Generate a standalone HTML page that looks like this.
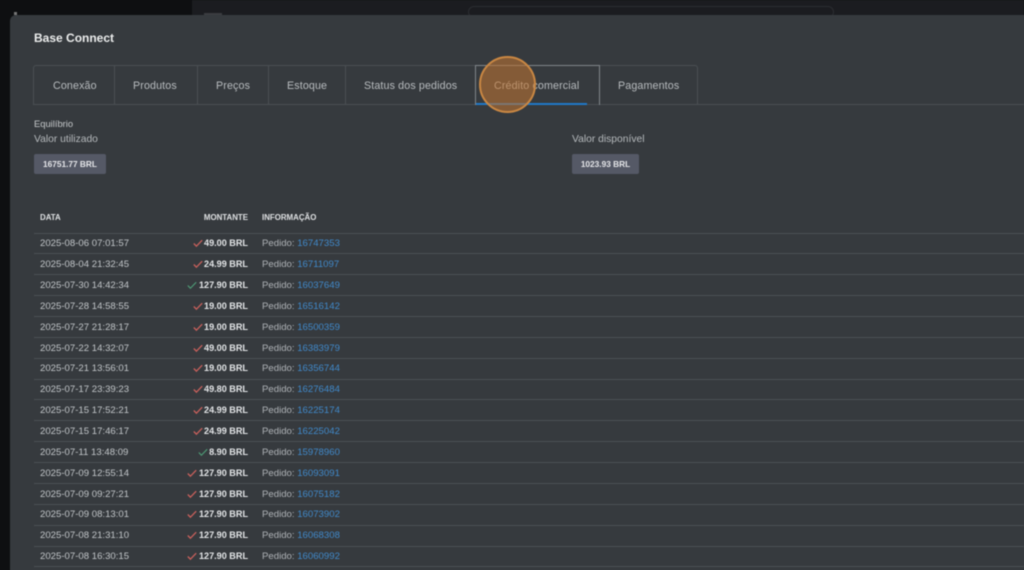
<!DOCTYPE html>
<html lang="pt"><head><meta charset="utf-8"><title>Base Connect</title>
<style>
*{box-sizing:border-box}
html,body{margin:0;padding:0;width:1024px;height:570px;overflow:hidden;background:#0e0f11}
body{font-family:"Liberation Sans",sans-serif;position:relative}
#p{position:absolute;inset:0;filter:blur(.4px)}
.a{position:absolute;white-space:nowrap}
.top{left:192px;top:0;width:832px;height:15px;background:#1b1c20}
.modal{left:10px;top:15px;width:1030px;height:570px;background:#363a3e;border-radius:6px 0 0 0}
.t{font-size:10.7px;color:#b8bcbf;line-height:13px;letter-spacing:.13px}
.sep{top:65px;width:1px;height:39px;background:#4a4f53}
.h{top:213px;font-size:7.9px;font-weight:700;color:#dfe1e3;line-height:10px}
.ln{left:34px;width:990px;height:1px;background:#4b5054}
.d,.i{margin-top:1px}
.d{left:40px;font-size:9.6px;color:#c2c6c9;line-height:12px}
.m{right:776px;font-size:9.1px;font-weight:700;color:#e4e6e8;line-height:12px}
.i{left:262px;font-size:9.6px;color:#afb3b7;line-height:12px}
.i b{font-weight:400;color:#4089ca}
svg{position:absolute;margin-top:1px}
.badge{top:154px;height:20px;background:#555966;border-radius:2px;font-size:8.3px;font-weight:700;color:#e6e7ea;line-height:20px;text-align:center}
</style></head><body><div id="p">
<div class="a top"></div>
<div class="a" style="left:14px;top:12px;width:3px;height:3px;background:#777"></div>
<div class="a" style="left:204px;top:13px;width:18px;height:2px;background:#3a3c40"></div>
<div class="a" style="left:468px;top:6px;width:366px;height:12px;border:1px solid #2b2d31;border-radius:9px"></div>
<div class="a modal"></div>
<div class="a" style="left:34px;top:31px;font-size:12px;font-weight:700;color:#eceded;line-height:15px">Base Connect</div>

<div class="a" style="left:33px;top:65px;width:665px;height:40px;border:1px solid #4a4f53;border-radius:3px 3px 0 0"></div>
<div class="a" style="left:33px;top:104px;width:991px;height:1px;background:#4a4f53"></div>
<div class="a sep" style="left:114px"></div>
<div class="a sep" style="left:197px"></div>
<div class="a sep" style="left:268px"></div>
<div class="a sep" style="left:345px"></div>
<div class="a" style="left:475px;top:65px;width:125px;height:40px;border:1px solid #80858a;border-bottom:0"></div>
<div class="a" style="left:476px;top:103px;width:111px;height:2px;background:#1f78c8"></div>
<div class="a t" style="left:53px;top:80px">Conexão</div>
<div class="a t" style="left:133px;top:80px">Produtos</div>
<div class="a t" style="left:216px;top:80px">Preços</div>
<div class="a t" style="left:287px;top:80px">Estoque</div>
<div class="a t" style="left:364px;top:80px">Status dos pedidos</div>
<div class="a t" style="left:494px;top:80px">Crédito comercial</div>
<div class="a t" style="left:618px;top:80px">Pagamentos</div>
<div class="a" style="left:479px;top:56px;width:57px;height:57px;border-radius:50%;background:rgba(190,115,50,.58);border:2px solid #c98743"></div>

<div class="a" style="left:34px;top:118px;font-size:9.4px;color:#c6c9cb;line-height:12px">Equilíbrio</div>
<div class="a" style="left:34px;top:133px;font-size:10.3px;color:#b5b9bc;line-height:13px">Valor utilizado</div>
<div class="a" style="left:572px;top:133px;font-size:10.3px;color:#b5b9bc;line-height:13px">Valor disponível</div>
<div class="a badge" style="left:34px;width:72px">16751.77 BRL</div>
<div class="a badge" style="left:572px;width:67px">1023.93 BRL</div>

<div class="a h" style="left:40px">DATA</div>
<div class="a h" style="right:776px">MONTANTE</div>
<div class="a h" style="left:262px">INFORMAÇÃO</div>

<div class="a ln" style="top:233px"></div><div class="a ln" style="top:253px"></div><div class="a ln" style="top:274px"></div><div class="a ln" style="top:295px"></div><div class="a ln" style="top:316px"></div><div class="a ln" style="top:337px"></div><div class="a ln" style="top:358px"></div><div class="a ln" style="top:379px"></div><div class="a ln" style="top:399px"></div><div class="a ln" style="top:420px"></div><div class="a ln" style="top:441px"></div><div class="a ln" style="top:462px"></div><div class="a ln" style="top:483px"></div><div class="a ln" style="top:504px"></div><div class="a ln" style="top:525px"></div><div class="a ln" style="top:546px"></div><div class="a ln" style="top:566px"></div>

<div class="a d" style="top:237px">2025-08-06 07:01:57</div><div class="a m" style="top:237px">49.00 BRL</div><div class="a i" style="top:237px">Pedido: <b>16747353</b></div>
<svg style="left:193px;top:238px" width="10" height="9" viewBox="0 0 10 9"><path d="M.8 4.5 3.4 7.2 9.2 1.2" fill="none" stroke="#c9605c" stroke-width="1.3"/></svg>
<div class="a d" style="top:258px">2025-08-04 21:32:45</div><div class="a m" style="top:258px">24.99 BRL</div><div class="a i" style="top:258px">Pedido: <b>16711097</b></div>
<svg style="left:193px;top:259px" width="10" height="9" viewBox="0 0 10 9"><path d="M.8 4.5 3.4 7.2 9.2 1.2" fill="none" stroke="#c9605c" stroke-width="1.3"/></svg>
<div class="a d" style="top:279px">2025-07-30 14:42:34</div><div class="a m" style="top:279px">127.90 BRL</div><div class="a i" style="top:279px">Pedido: <b>16037649</b></div>
<svg style="left:187px;top:280px" width="10" height="9" viewBox="0 0 10 9"><path d="M.8 4.5 3.4 7.2 9.2 1.2" fill="none" stroke="#4f9f78" stroke-width="1.1"/></svg>
<div class="a d" style="top:300px">2025-07-28 14:58:55</div><div class="a m" style="top:300px">19.00 BRL</div><div class="a i" style="top:300px">Pedido: <b>16516142</b></div>
<svg style="left:193px;top:301px" width="10" height="9" viewBox="0 0 10 9"><path d="M.8 4.5 3.4 7.2 9.2 1.2" fill="none" stroke="#c9605c" stroke-width="1.3"/></svg>
<div class="a d" style="top:321px">2025-07-27 21:28:17</div><div class="a m" style="top:321px">19.00 BRL</div><div class="a i" style="top:321px">Pedido: <b>16500359</b></div>
<svg style="left:193px;top:322px" width="10" height="9" viewBox="0 0 10 9"><path d="M.8 4.5 3.4 7.2 9.2 1.2" fill="none" stroke="#c9605c" stroke-width="1.3"/></svg>
<div class="a d" style="top:342px">2025-07-22 14:32:07</div><div class="a m" style="top:342px">49.00 BRL</div><div class="a i" style="top:342px">Pedido: <b>16383979</b></div>
<svg style="left:193px;top:343px" width="10" height="9" viewBox="0 0 10 9"><path d="M.8 4.5 3.4 7.2 9.2 1.2" fill="none" stroke="#c9605c" stroke-width="1.3"/></svg>
<div class="a d" style="top:362px">2025-07-21 13:56:01</div><div class="a m" style="top:362px">19.00 BRL</div><div class="a i" style="top:362px">Pedido: <b>16356744</b></div>
<svg style="left:193px;top:363px" width="10" height="9" viewBox="0 0 10 9"><path d="M.8 4.5 3.4 7.2 9.2 1.2" fill="none" stroke="#c9605c" stroke-width="1.3"/></svg>
<div class="a d" style="top:383px">2025-07-17 23:39:23</div><div class="a m" style="top:383px">49.80 BRL</div><div class="a i" style="top:383px">Pedido: <b>16276484</b></div>
<svg style="left:193px;top:384px" width="10" height="9" viewBox="0 0 10 9"><path d="M.8 4.5 3.4 7.2 9.2 1.2" fill="none" stroke="#c9605c" stroke-width="1.3"/></svg>
<div class="a d" style="top:404px">2025-07-15 17:52:21</div><div class="a m" style="top:404px">24.99 BRL</div><div class="a i" style="top:404px">Pedido: <b>16225174</b></div>
<svg style="left:193px;top:405px" width="10" height="9" viewBox="0 0 10 9"><path d="M.8 4.5 3.4 7.2 9.2 1.2" fill="none" stroke="#c9605c" stroke-width="1.3"/></svg>
<div class="a d" style="top:425px">2025-07-15 17:46:17</div><div class="a m" style="top:425px">24.99 BRL</div><div class="a i" style="top:425px">Pedido: <b>16225042</b></div>
<svg style="left:193px;top:426px" width="10" height="9" viewBox="0 0 10 9"><path d="M.8 4.5 3.4 7.2 9.2 1.2" fill="none" stroke="#c9605c" stroke-width="1.3"/></svg>
<div class="a d" style="top:446px">2025-07-11 13:48:09</div><div class="a m" style="top:446px">8.90 BRL</div><div class="a i" style="top:446px">Pedido: <b>15978960</b></div>
<svg style="left:198px;top:447px" width="10" height="9" viewBox="0 0 10 9"><path d="M.8 4.5 3.4 7.2 9.2 1.2" fill="none" stroke="#4f9f78" stroke-width="1.1"/></svg>
<div class="a d" style="top:467px">2025-07-09 12:55:14</div><div class="a m" style="top:467px">127.90 BRL</div><div class="a i" style="top:467px">Pedido: <b>16093091</b></div>
<svg style="left:187px;top:468px" width="10" height="9" viewBox="0 0 10 9"><path d="M.8 4.5 3.4 7.2 9.2 1.2" fill="none" stroke="#c9605c" stroke-width="1.3"/></svg>
<div class="a d" style="top:488px">2025-07-09 09:27:21</div><div class="a m" style="top:488px">127.90 BRL</div><div class="a i" style="top:488px">Pedido: <b>16075182</b></div>
<svg style="left:187px;top:489px" width="10" height="9" viewBox="0 0 10 9"><path d="M.8 4.5 3.4 7.2 9.2 1.2" fill="none" stroke="#c9605c" stroke-width="1.3"/></svg>
<div class="a d" style="top:508px">2025-07-09 08:13:01</div><div class="a m" style="top:508px">127.90 BRL</div><div class="a i" style="top:508px">Pedido: <b>16073902</b></div>
<svg style="left:187px;top:509px" width="10" height="9" viewBox="0 0 10 9"><path d="M.8 4.5 3.4 7.2 9.2 1.2" fill="none" stroke="#c9605c" stroke-width="1.3"/></svg>
<div class="a d" style="top:529px">2025-07-08 21:31:10</div><div class="a m" style="top:529px">127.90 BRL</div><div class="a i" style="top:529px">Pedido: <b>16068308</b></div>
<svg style="left:187px;top:530px" width="10" height="9" viewBox="0 0 10 9"><path d="M.8 4.5 3.4 7.2 9.2 1.2" fill="none" stroke="#c9605c" stroke-width="1.3"/></svg>
<div class="a d" style="top:550px">2025-07-08 16:30:15</div><div class="a m" style="top:550px">127.90 BRL</div><div class="a i" style="top:550px">Pedido: <b>16060992</b></div>
<svg style="left:187px;top:551px" width="10" height="9" viewBox="0 0 10 9"><path d="M.8 4.5 3.4 7.2 9.2 1.2" fill="none" stroke="#c9605c" stroke-width="1.3"/></svg>
</div></body></html>
